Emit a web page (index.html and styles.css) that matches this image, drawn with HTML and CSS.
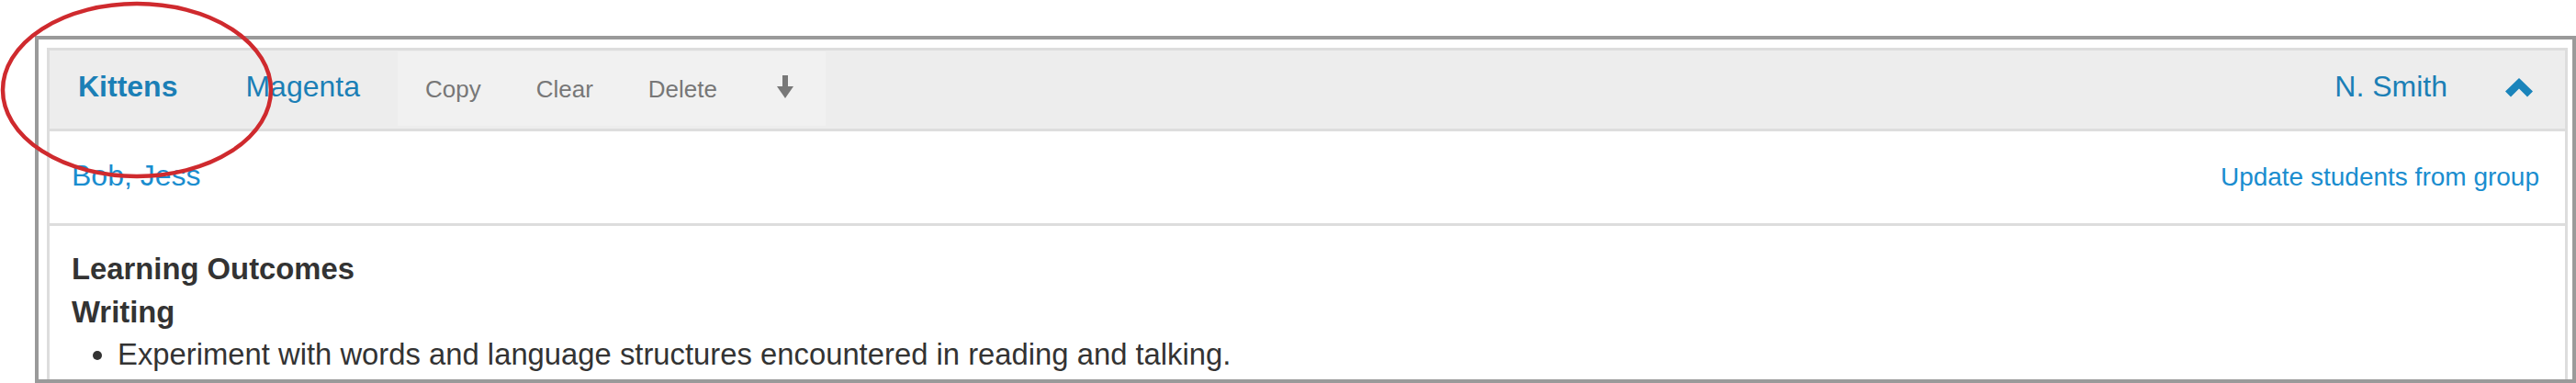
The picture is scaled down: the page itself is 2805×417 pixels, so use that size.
FILE: index.html
```html
<!DOCTYPE html>
<html lang="en">
<head>
<meta charset="utf-8">
<title>Lesson group</title>
<link rel="stylesheet" href="styles.css">
</head>
<body>
<div class="frame">
  <div class="panel">
    <div class="header">
      <div class="tabs">
        <a class="tab tab-active">Kittens</a>
        <a class="tab">Magenta</a>
      </div>
      <div class="actions">
        <span class="action">Copy</span>
        <span class="action">Clear</span>
        <span class="action">Delete</span>
        <span class="action action-icon">
          <svg class="arrow" width="28" height="25" viewBox="0 0 28 25"><rect x="11" y="0" width="6" height="14" fill="#787878"/><polygon points="5,12 23,12 14,25" fill="#787878"/></svg>
        </span>
      </div>
      <div class="owner">
        <a class="owner-name">N. Smith</a>
        <svg class="chevron" width="30" height="21" viewBox="0 0 30 21"><polygon points="0,14.5 15,0 30,14.5 24,20.5 15,11.5 6,20.5" fill="#1a84bb"/></svg>
      </div>
    </div>
    <div class="students">
      <a class="students-list">Bob, Jess</a>
      <a class="students-update">Update students from group</a>
    </div>
    <div class="content">
      <div class="heading">Learning Outcomes</div>
      <div class="heading">Writing</div>
      <ul class="outcomes">
        <li>Experiment with words and language structures encountered in reading and talking.</li>
      </ul>
    </div>
  </div>
</div>
<svg class="annotation" width="310" height="210" viewBox="0 0 310 210"><ellipse cx="149" cy="98" rx="146" ry="94" fill="none" stroke="#cf2a2e" stroke-width="4.5"/></svg>
</body>
</html>
```

FILE: styles.css
```css
html, body {
  margin: 0;
  padding: 0;
  background: #ffffff;
}

body {
  position: relative;
  font-family: "Liberation Sans", Arial, Helvetica, sans-serif;
  color: #333333;
  font-size: 32px;
  line-height: 46px;
}

a {
  text-decoration: none;
  cursor: pointer;
}

.frame {
  margin: 39px 0 0 38px;
  width: 2767px;
  height: 378px;
  box-sizing: border-box;
  border: 4px solid #9a9a9a;
  padding: 9px 5px 0 9px;
  overflow: hidden;
}

.panel {
  border: 3px solid #dddddd;
  border-bottom: 0;
  height: 400px;
}

.header {
  display: flex;
  align-items: flex-start;
  height: 88px;
  box-sizing: border-box;
  background: #ededed;
  border-bottom: 3px solid #dddddd;
}

.tabs {
  display: flex;
  gap: 74px;
  padding: 16px 0 0 31px;
}

.tab {
  color: #1b7fb6;
  font-size: 32px;
}

.tab-active {
  font-weight: bold;
}

.actions {
  display: flex;
  align-self: stretch;
  margin: 1px 0 3px 41px;
  background: #f1f1f1;
}

.action {
  display: block;
  padding: 18px 30px 0 30px;
  font-size: 26px;
  line-height: 46px;
  color: #777777;
}

.action-icon {
  padding-top: 26px;
}

.arrow {
  display: block;
}

.owner {
  display: flex;
  align-items: flex-start;
  margin-left: auto;
  padding: 16px 35px 0 0;
}

.owner-name {
  color: #1b7fb6;
  font-size: 32px;
}

.chevron {
  display: block;
  margin: 14px 0 0 63px;
}

.students {
  display: flex;
  justify-content: space-between;
  align-items: baseline;
  height: 103px;
  box-sizing: border-box;
  padding: 25px 28px 0 24px;
  border-bottom: 3px solid #dddddd;
}

.students-list {
  color: #1a8dcf;
  font-size: 32px;
}

.students-update {
  color: #1a8dcf;
  font-size: 28px;
}

.content {
  padding: 24px 24px 0 24px;
  font-size: 32.8px;
  line-height: 46.5px;
}

.heading {
  font-weight: bold;
  color: #333333;
}

.outcomes {
  margin: 0;
  padding-left: 50px;
}

.annotation {
  position: absolute;
  left: 0;
  top: 0;
  pointer-events: none;
}
```
